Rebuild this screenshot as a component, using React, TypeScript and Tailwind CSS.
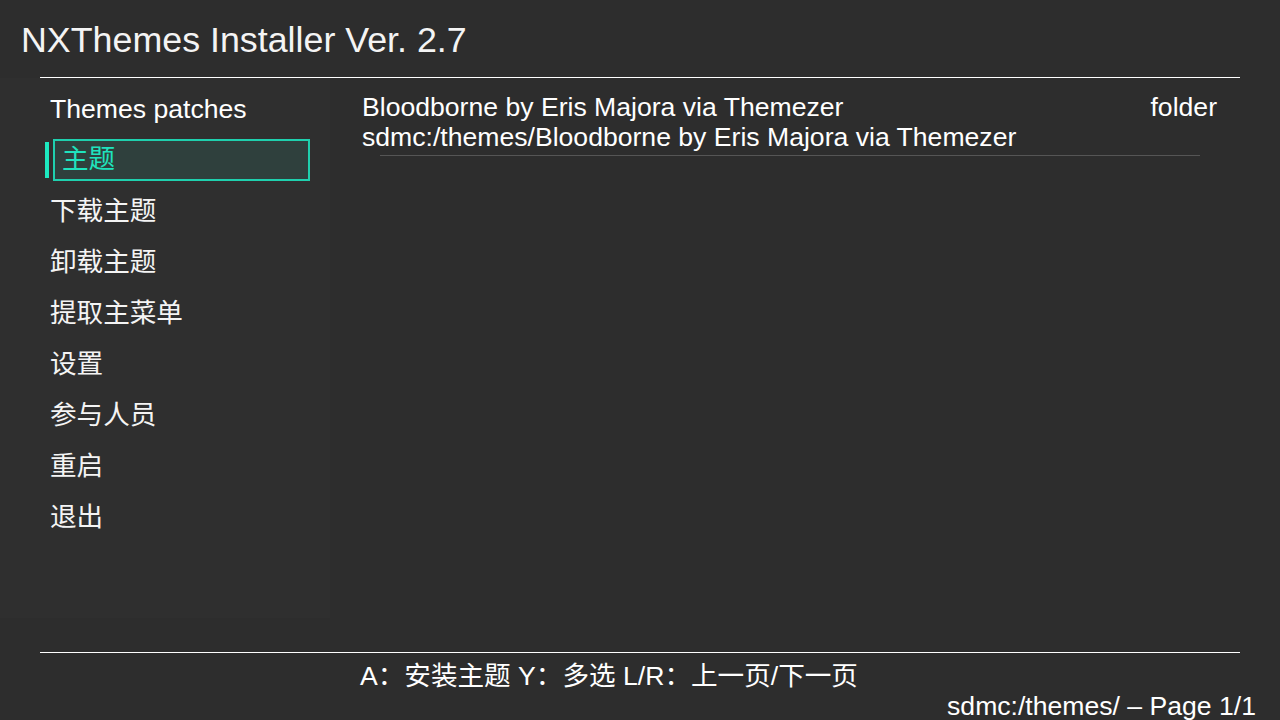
import React from "react";

const menu = ["下载主题", "卸载主题", "提取主菜单", "设置", "参与人员", "重启", "退出"];

const font = { fontFamily: '"Liberation Sans", "Noto Sans CJK SC", sans-serif' };

const App = () => {
  return (
    <div
      className="w-[1280px] h-[720px] bg-[#2d2d2d] text-white flex flex-col overflow-hidden"
      style={font}
    >
      <header className="h-[77px] pl-[21px] pt-[18px]">
        <h1 className="text-[35.8px] leading-[44px] text-[#f4f4f4]">NXThemes Installer Ver. 2.7</h1>
      </header>
      <div className="mx-[40px] h-px bg-white" />

      <div className="flex flex-1">
        <aside className="w-[330px] bg-[#2f2f2f] flex flex-col pl-[50px] pr-[20px] pt-[14px] mb-[34px]">
          <div className="text-[26.6px] leading-[34px]">Themes patches</div>
          <div className="flex items-center mt-[13px] h-[42px] -ml-[5px]">
            <div className="w-[4px] h-[36px] bg-[#1de9c0] mr-[4px]" />
            <div className="flex-1 h-[42px] border-2 border-[#1fd0ae] bg-[#2f403d] flex items-center pl-[7px]">
              <span className="text-[26.6px] text-[#1fe3bd]">主题</span>
            </div>
          </div>
          <ul className="flex flex-col mt-[5px]">
            {menu.map((m) => (
              <li key={m} className="h-[51px] flex items-center text-[26.6px] text-[#f4f4f4]">
                {m}
              </li>
            ))}
          </ul>
        </aside>

        <main className="flex-1 pl-[32px] pr-[63px] pt-[14px]">
          <div className="flex justify-between text-[26.6px] leading-[30px]">
            <span>Bloodborne by Eris Majora via Themezer</span>
            <span>folder</span>
          </div>
          <div className="text-[26.6px] leading-[30px]">sdmc:/themes/Bloodborne by Eris Majora via Themezer</div>
          <div className="ml-[18px] mr-[17px] mt-[3px] h-px bg-[#555555]" />
        </main>
      </div>

      <div className="mx-[40px] h-px bg-white" />
      <footer className="h-[67px]">
        <div className="pl-[360px] pt-[8px] text-[26.6px] leading-[30px]">A：安装主题 Y：多选 L/R：上一页/下一页</div>
        <div className="text-right pr-[24px] text-[26.6px] leading-[30px]">sdmc:/themes/ – Page 1/1</div>
      </footer>
    </div>
  );
};

export default App;
